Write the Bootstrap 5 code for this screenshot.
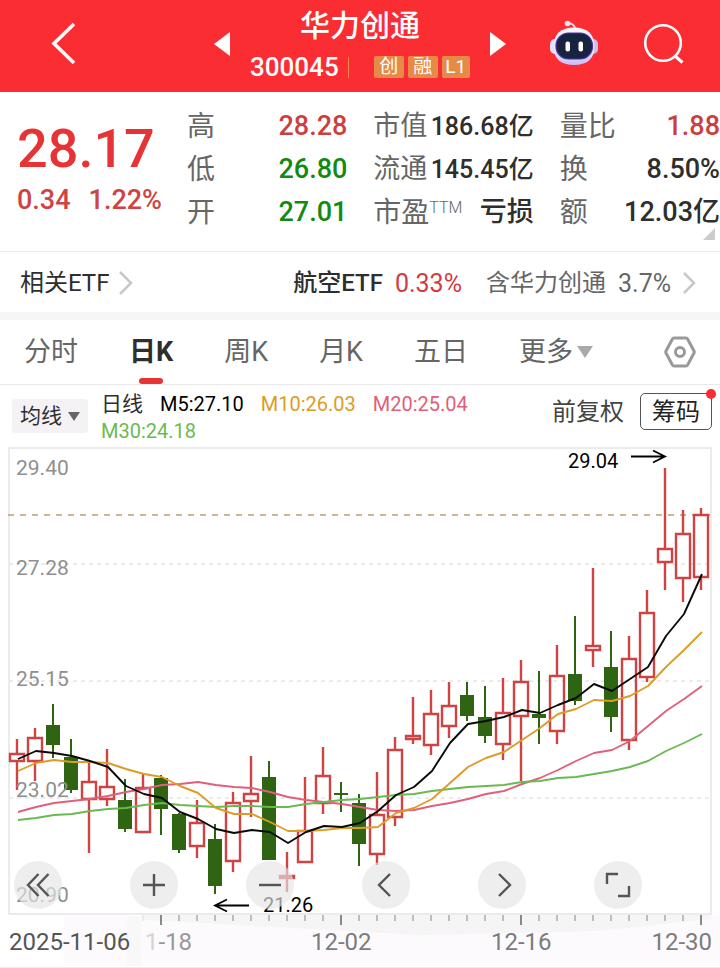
<!DOCTYPE html>
<html lang="zh-CN">
<head>
<meta charset="utf-8">
<meta name="viewport" content="width=device-width, initial-scale=1">
<title>华力创通 300045</title>
<link href="https://cdn.jsdelivr.net/npm/bootstrap@5.3.0/dist/css/bootstrap.min.css" rel="stylesheet">
<style>
body{font-family:Roboto,"Noto Sans CJK SC",sans-serif;color:#2e2e2e;background:#fff;line-height:1;overflow-x:hidden}
button{background:none;border:0;padding:0;color:inherit;line-height:1}
svg{display:block}
.top-bar{background:#fa2d33;height:92px;padding:0 36px 4px 50px;color:#fff}
.stock-id{width:220px;margin:0 20px}
.stock-name{font-size:30px;font-weight:500;line-height:38px;margin:0 0 8px}
.stock-code{font-size:26px;font-weight:500;line-height:28px}
.code-rule{width:1px;height:21px;background:#f2874e;margin:0 25px 0 9px}
.mark-tag{background:#e68a48;border-radius:2px;font-size:19px;line-height:22px;height:22px;width:30px;text-align:center;margin-right:4px}
.mark-tag:last-child{margin-right:0;width:28px}
.top-tools{margin-left:44px;gap:46px}
.quote{padding:13px 0 17px 17px;border-bottom:1px solid #e9e9e9}
.last-box{width:170px;flex:none}
.last-price{font-size:54px;font-weight:500;line-height:56px;color:#e63335;margin-top:16px}
.last-change{font-size:27px;font-weight:500;line-height:32px;color:#d04343;gap:18px;margin-top:7px}
.stat-grid{display:grid;grid-template-columns:repeat(3,1fr);column-gap:26px;flex:1;margin:0}
.stat{display:flex;justify-content:space-between;align-items:center;height:43px;white-space:nowrap}
.stat dt{font-weight:400;font-size:28px;color:#666}
.stat dd{font-weight:500;font-size:27px;margin:0}
.stat.tight dt{font-size:27px}
.stat.tight dd{font-size:25px}
.stat sup{font-size:16px;font-weight:300;top:-9px}
.up{color:#cc3f3f}.down{color:#128a12}
.corner{width:12px;height:12px;right:5px;bottom:11px;background:#ccc;clip-path:polygon(100% 0,100% 100%,0 100%)}
.etf-row{height:60px;padding:2px 23px 0 20px;font-size:24px}
.etf-row a{color:inherit;text-decoration:none}
.etf-row .pct{font-size:25px}
.etf-row .etf-name{font-weight:500}
.etf-row .etf-change{color:#d23a45}
.etf-row .etf-share{color:#666}
.band{height:8px;background:#f6f6f6}
.period-tabs{height:65px;padding:0 24px;border-bottom:1px solid #e9e9e9;font-size:27px;color:#666}
.period-tabs .tab-set{gap:51px}
.period-tabs button{height:64px;display:flex;align-items:center}
.period-tabs .on{font-weight:700;color:#2e2e2e;position:relative}
.period-tabs .on::after{content:"";position:absolute;left:10px;bottom:0;width:24px;height:6px;border-radius:3px;background:#e63335}
.tri{width:0;height:0;border:8px solid transparent;border-top:12px solid #aaa;border-bottom:0}
.ma-row{padding:6px 8px 0 12px;height:60px}
.ma-btn{background:#f5f2f6;border-radius:4px;height:34px;width:76px;font-size:21px;margin-top:8px;flex:none}
.ma-btn .tri{border-width:9px 6px 0;border-top-color:#666;margin-left:6px}
.ma-legend{font-size:20px;line-height:27px;margin-left:13px;column-gap:17px;flex:1;align-content:flex-start}
.ma-legend .kind{font-size:21px}
.m5{color:#000}.m10{color:#dc9c28}.m20{color:#e0607a}.m30{color:#6dba50}
.adj{font-size:24px;height:37px;color:#444;flex:none;margin:2px 16px 0 8px}
.chip{border:1px solid #555;border-radius:5px;height:37px;width:72px;font-size:24px;position:relative;flex:none;margin-top:2px;color:#222}
.chip i{position:absolute;width:10px;height:10px;border-radius:50%;background:#fa2d33;right:-5px;top:-5px}
.chart{width:100%;height:auto}
.chart text{font-family:Roboto,"Noto Sans CJK SC",sans-serif}
.chart-tools{left:2%;right:10.8%;bottom:11.3%}
.chart-tools button{width:48px;height:48px;border-radius:50%;background:rgba(229,229,229,.65);display:flex;align-items:center;justify-content:center}
.chart-tools path{fill:none;stroke:#555;stroke-width:2.4}
</style>
<script src="https://cdn.jsdelivr.net/npm/bootstrap@5.3.0/dist/js/bootstrap.bundle.min.js"></script>
</head>
<body>
<header class="top-bar d-flex align-items-center">
  <button aria-label="返回"><svg width="28" height="46" viewBox="0 0 28 46"><path d="M24 3 4 22.500 24 42" fill="none" stroke="#fff" stroke-width="3.600"/></svg></button>
  <div class="d-flex align-items-center ms-auto">
    <button aria-label="上一只"><svg width="16" height="24" viewBox="0 0 16 24"><path d="M16 0v24L0 12z" fill="#fff"/></svg></button>
    <div class="stock-id">
      <h1 class="stock-name text-center">华力创通</h1>
      <div class="d-flex align-items-center">
        <span class="stock-code">300045</span><span class="code-rule"></span>
        <span class="mark-tag">创</span><span class="mark-tag">融</span><span class="mark-tag">L1</span>
      </div>
    </div>
    <button aria-label="下一只"><svg width="16" height="24" viewBox="0 0 16 24"><path d="M0 0v24l16-12z" fill="#fff"/></svg></button>
  </div>
  <div class="top-tools d-flex align-items-center">
    <button aria-label="智能助手"><svg width="48" height="48" viewBox="0 0 48 48">
      <defs><linearGradient id="shell" x2="0" y2="1"><stop offset="0" stop-color="#fff6fb"/><stop offset=".6" stop-color="#efe3fa"/><stop offset="1" stop-color="#c9bdf6"/></linearGradient></defs>
      <path d="M17 4q7-2 8 5" fill="none" stroke="#f6dbe6" stroke-width="2"/><circle cx="17.500" cy="3.500" r="2.800" fill="#f9dfe8"/>
      <rect x="0" y="19" width="10" height="15" rx="5" fill="#e5e0f8"/><rect x="38" y="19" width="10" height="15" rx="5" fill="#cdbdf2"/>
      <path d="M24 7.500c13 0 20.500 6.500 20.500 19S37 45 24 45 3.500 39 3.500 26.500 11 7.500 24 7.500z" fill="url(#shell)"/>
      <rect x="6" y="13" width="36.500" height="26" rx="12.500" fill="#18233f" stroke="#4a35a8" stroke-width="1.200"/>
      <rect x="15.500" y="21.500" width="4.500" height="10" rx="2" fill="#fff"/><rect x="28.500" y="21.500" width="4.500" height="10" rx="2" fill="#fff"/>
    </svg></button>
    <button aria-label="搜索"><svg width="40" height="42" viewBox="0 0 40 42"><circle cx="19" cy="20" r="17.800" fill="none" stroke="#fff" stroke-width="2.600"/><path d="m31 33 7.500 6.500" stroke="#fff" stroke-width="3"/></svg></button>
  </div>
</header>
<main>
<section class="quote d-flex position-relative">
  <div class="last-box">
    <div class="last-price">28.17</div>
    <div class="last-change d-flex"><span>0.34</span><span>1.22%</span></div>
  </div>
  <dl class="stat-grid">
    <div class="stat"><dt>高</dt><dd class="up">28.28</dd></div>
    <div class="stat tight"><dt>市值</dt><dd>186.68亿</dd></div>
    <div class="stat"><dt>量比</dt><dd class="up">1.88</dd></div>
    <div class="stat"><dt>低</dt><dd class="down">26.80</dd></div>
    <div class="stat tight"><dt>流通</dt><dd>145.45亿</dd></div>
    <div class="stat"><dt>换</dt><dd>8.50%</dd></div>
    <div class="stat"><dt>开</dt><dd class="down">27.01</dd></div>
    <div class="stat"><dt>市盈<sup>TTM</sup></dt><dd>亏损</dd></div>
    <div class="stat"><dt>额</dt><dd>12.03亿</dd></div>
  </dl>
  <span class="corner position-absolute"></span>
</section>
<section class="etf-row d-flex align-items-center">
  <a href="#" class="d-flex align-items-center">相关ETF<svg class="ms-2" width="18" height="26" viewBox="0 0 18 26"><path d="m3 2 11 11L3 24" fill="none" stroke="#c8c8c8" stroke-width="2.500"/></svg></a>
  <a href="#" class="d-flex align-items-center ms-auto"><span class="etf-name">航空ETF</span><span class="pct etf-change ms-2 ps-1">0.33%</span></a>
  <a href="#" class="etf-share d-flex align-items-center ms-4">含华力创通<span class="pct ms-2 ps-1">3.7%</span><svg class="ms-2" width="18" height="26" viewBox="0 0 18 26"><path d="m5 3 10 10L5 23" fill="none" stroke="#c8c8c8" stroke-width="2.500"/></svg></a>
</section>
<div class="band"></div>
<nav class="period-tabs d-flex align-items-center justify-content-between">
  <div class="tab-set d-flex">
    <button>分时</button><button class="on">日K</button><button>周K</button><button>月K</button><button>五日</button><button>更多<span class="tri ms-1"></span></button>
  </div>
  <button aria-label="设置"><svg width="32" height="32" viewBox="0 0 32 32" fill="none" stroke="#999" stroke-width="3"><path d="M10 2h12q1 0 1.600 1L30 15q.5 1 0 2l-6.400 12q-.6 1-1.600 1H10q-1 0-1.600-1L2 17q-.5-1 0-2L8.400 3Q9 2 10 2z"/><circle cx="16" cy="16" r="4.500"/></svg></button>
</nav>
<section class="ma-row d-flex align-items-start">
  <button class="ma-btn d-flex align-items-center justify-content-center">均线<span class="tri"></span></button>
  <div class="ma-legend d-flex flex-wrap">
    <span class="kind">日线</span><span class="m5">M5:27.10</span><span class="m10">M10:26.03</span><span class="m20">M20:25.04</span><span class="m30">M30:24.18</span>
  </div>
  <button class="adj">前复权</button>
  <button class="chip">筹码<i></i></button>
</section>
<section class="position-relative">
  <svg class="chart" viewBox="0 445 720 523" role="img" aria-label="日K线图">
    <path d="M64 916H720V966H64z" fill="#fdfafd"/>
    <path d="M143 915H711V919L600 931 420 935 143 920z" fill="#f6f5f6"/>
    <path d="M127 916h14v50h-14z" fill="#f8f8f8"/>
    <g fill="none" stroke="#ebebeb">
      <path d="M9 564H711M9 681H711M9 798H711" stroke-width="2" stroke-dasharray="4 4"/>
      <rect x="9" y="448" width="702" height="466" stroke-width="2"/>
      <path d="M0 967.500H720" stroke-width="1"/>
    </g>
    <path d="M8 515H711" stroke="#bfa06a" stroke-width="1.500" stroke-dasharray="6 6"/>
    <g id="candles"></g>
    <g font-size="21" fill="#8f8f8f">
      <text x="16" y="475">29.40</text><text x="16" y="575">27.28</text><text x="16" y="686">25.15</text><text x="16" y="797">23.02</text><text x="16" y="902">20.90</text>
    </g>
    <g id="averages" fill="none" stroke-width="1.900" stroke-linejoin="round"></g>
    <g font-size="20" fill="#000"><text x="568" y="468">29.04</text><text x="263" y="912">21.26</text></g>
    <path d="M631 456.500H664M653 450.500 665 456.500 653 462.500M249 905.500H216M227 899.500 215 905.500 227 911.500" fill="none" stroke="#000" stroke-width="1.800"/>
    <g id="ticks"></g>
    <g font-size="24" fill="#7c7c7c">
      <text x="9" y="950" fill="#555">2025-11-06</text><text x="145" y="950" fill="#999"><tspan fill="#d4d4d4">1</tspan>-18</text><text x="311" y="950">12-02</text><text x="491" y="950">12-16</text><text x="712" y="950" text-anchor="end">12-30</text>
    </g>
  </svg>
  <div class="chart-tools position-absolute d-flex justify-content-between">
    <button aria-label="最早"><svg width="28" height="28" viewBox="0 0 28 28"><path d="M14.500 3 4 14l10.500 11M24.500 3 14 14l10.500 11"/></svg></button>
    <button aria-label="放大"><svg width="28" height="28" viewBox="0 0 28 28"><path d="M3 14h22M14 3v22"/></svg></button>
    <button aria-label="缩小"><svg width="28" height="28" viewBox="0 0 28 28"><path d="M3 14h22"/></svg></button>
    <button aria-label="向左"><svg width="28" height="28" viewBox="0 0 28 28"><path d="M18 3 7 14l11 11"/></svg></button>
    <button aria-label="向右"><svg width="28" height="28" viewBox="0 0 28 28"><path d="m11 3 11 11-11 11"/></svg></button>
    <button aria-label="全屏"><svg width="28" height="28" viewBox="0 0 28 28"><path d="M3 13V3h11M25 15v10H14"/></svg></button>
  </div>
</section>
</main>
<script>
// Each candle: direction (1 up, 0 down), high, body top, body bottom, low
const candles=[[1,739,754,761,790],[1,728,738,761,781],[0,704,725,745,758],[0,739,757,790,793],[1,762,782,799,853],[1,749,787,799,806],[0,779,800,829,832],[1,774,788,832,832],[0,775,778,809,835],[0,813,814,850,853],[1,800,823,846,858],[0,824,839,886,894],[1,792,803,861,872],[1,756,794,801,817],[0,761,777,860,860],[1,852,876,878,892],[1,777,831,862,862],[1,747,776,803,814],[0,782,793,795,812],[0,794,803,844,866],[1,772,815,854,865],[1,737,750,817,826],[1,697,736,739,744],[1,690,714,745,755],[1,682,706,726,738],[0,682,695,716,721],[0,686,717,736,743],[1,678,713,744,760],[1,660,682,716,781],[0,671,714,718,744],[1,645,676,731,744],[0,616,674,701,705],[1,568,646,650,667],[0,631,667,717,732],[1,636,659,740,750],[1,590,613,677,682],[1,468,549,562,590],[1,510,534,578,602],[1,508,515,577,590]];
const averages={
 '#e0607a':[812,807,803,801,799,796,792,789,785,784,782,785,787,788,792,797,800,802,804,807,810,811,810,806,803,799,794,791,784,778,770,761,753,750,741,726,711,699,686],
 '#6ab951':[820,818,815,814,811,809,808,805,803,805,806,807,806,806,807,807,804,802,800,799,797,795,794,791,789,787,786,785,782,781,778,777,774,771,767,761,751,743,734],
 '#dc9c28':[771,763,760,762,762,763,769,774,777,786,793,808,814,814,822,831,831,830,828,828,827,813,808,799,783,767,758,752,740,728,714,709,700,701,696,686,667,650,632],
 '#0a0a0a':[759,751,753,756,761,767,786,794,798,812,819,829,833,830,832,843,832,826,827,823,811,795,787,771,743,724,721,717,710,713,705,698,684,691,679,667,636,614,574]};
const xAt=i=>17+18*i;
document.getElementById('candles').innerHTML=candles.map(([up,h,t,b,l],i)=>{
  const x=xAt(i);
  return up
    ?`<path d="M${x} ${h}V${t}M${x} ${b}V${l}M${x-7} ${t}H${x+7}V${b}H${x-7}z" fill="none" stroke="#d04343" stroke-width="2.400"/>`
    :`<path d="M${x} ${h}V${l}" stroke="#2f6412" stroke-width="2"/><rect x="${x-7}" y="${t}" width="14" height="${b-t}" fill="#2f6412"/>`;
}).join('');
document.getElementById('averages').innerHTML=Object.entries(averages).map(([c,v])=>`<polyline stroke="${c}" points="${v.map((y,i)=>xAt(i)+1+','+y).join(' ')}"/>`).join('');
document.getElementById('ticks').innerHTML=candles.map((_,i)=>{
  if(i<7)return'';
  const major=i%10===8;
  return `<path d="M${xAt(i)} 915V${major?925:921}" stroke="${i===7?'#ddd':'#888'}" stroke-width="${major?2:1}"/>`;
}).join('');
</script>
</body>
</html>
